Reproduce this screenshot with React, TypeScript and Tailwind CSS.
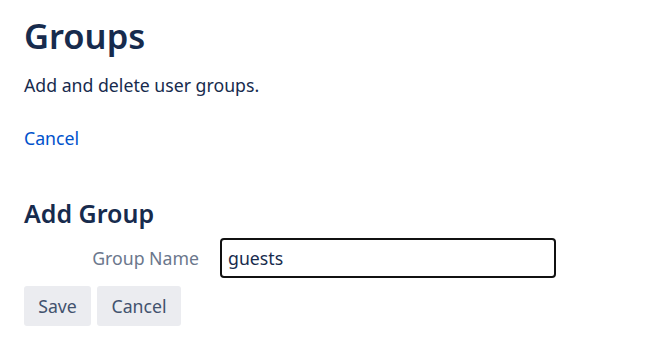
export default function App() {
  return (
    <div
      className="min-h-screen bg-white px-6 pt-3 text-[#172b4d]"
      style={{ fontFamily: '"Noto Sans", "Open Sans", sans-serif' }}
    >
      <h1 className="text-[34.5px] font-semibold leading-[48px]">Groups</h1>
      <p className="mt-3 text-[17.7px] leading-[26px]">Add and delete user groups.</p>
      <a href="#" className="mt-[27px] block text-[17.7px] leading-[26px] text-[#0052cc]">
        Cancel
      </a>

      <h2 className="mt-[46px] text-[25px] font-semibold leading-8">Add Group</h2>
      <form className="mt-[9px]">
        <div className="flex items-center">
          <label className="w-[196px] pr-[21px] text-right text-[17.7px] text-[#6b778c]">
            Group Name
          </label>
          <input
            defaultValue="guests"
            className="h-10 w-[336px] rounded-[4px] border-2 border-[#111] px-[6px] text-[17.7px] text-[#172b4d] outline-none"
          />
        </div>
        <div className="mt-2 flex gap-[6px]">
          <button
            type="button"
            className="h-10 w-[67px] rounded-[3px] bg-[#ebecf0] text-[17.7px] text-[#42526e]"
          >
            Save
          </button>
          <button
            type="button"
            className="h-10 w-[84px] rounded-[3px] bg-[#ebecf0] text-[17.7px] text-[#42526e]"
          >
            Cancel
          </button>
        </div>
      </form>
    </div>
  );
}
